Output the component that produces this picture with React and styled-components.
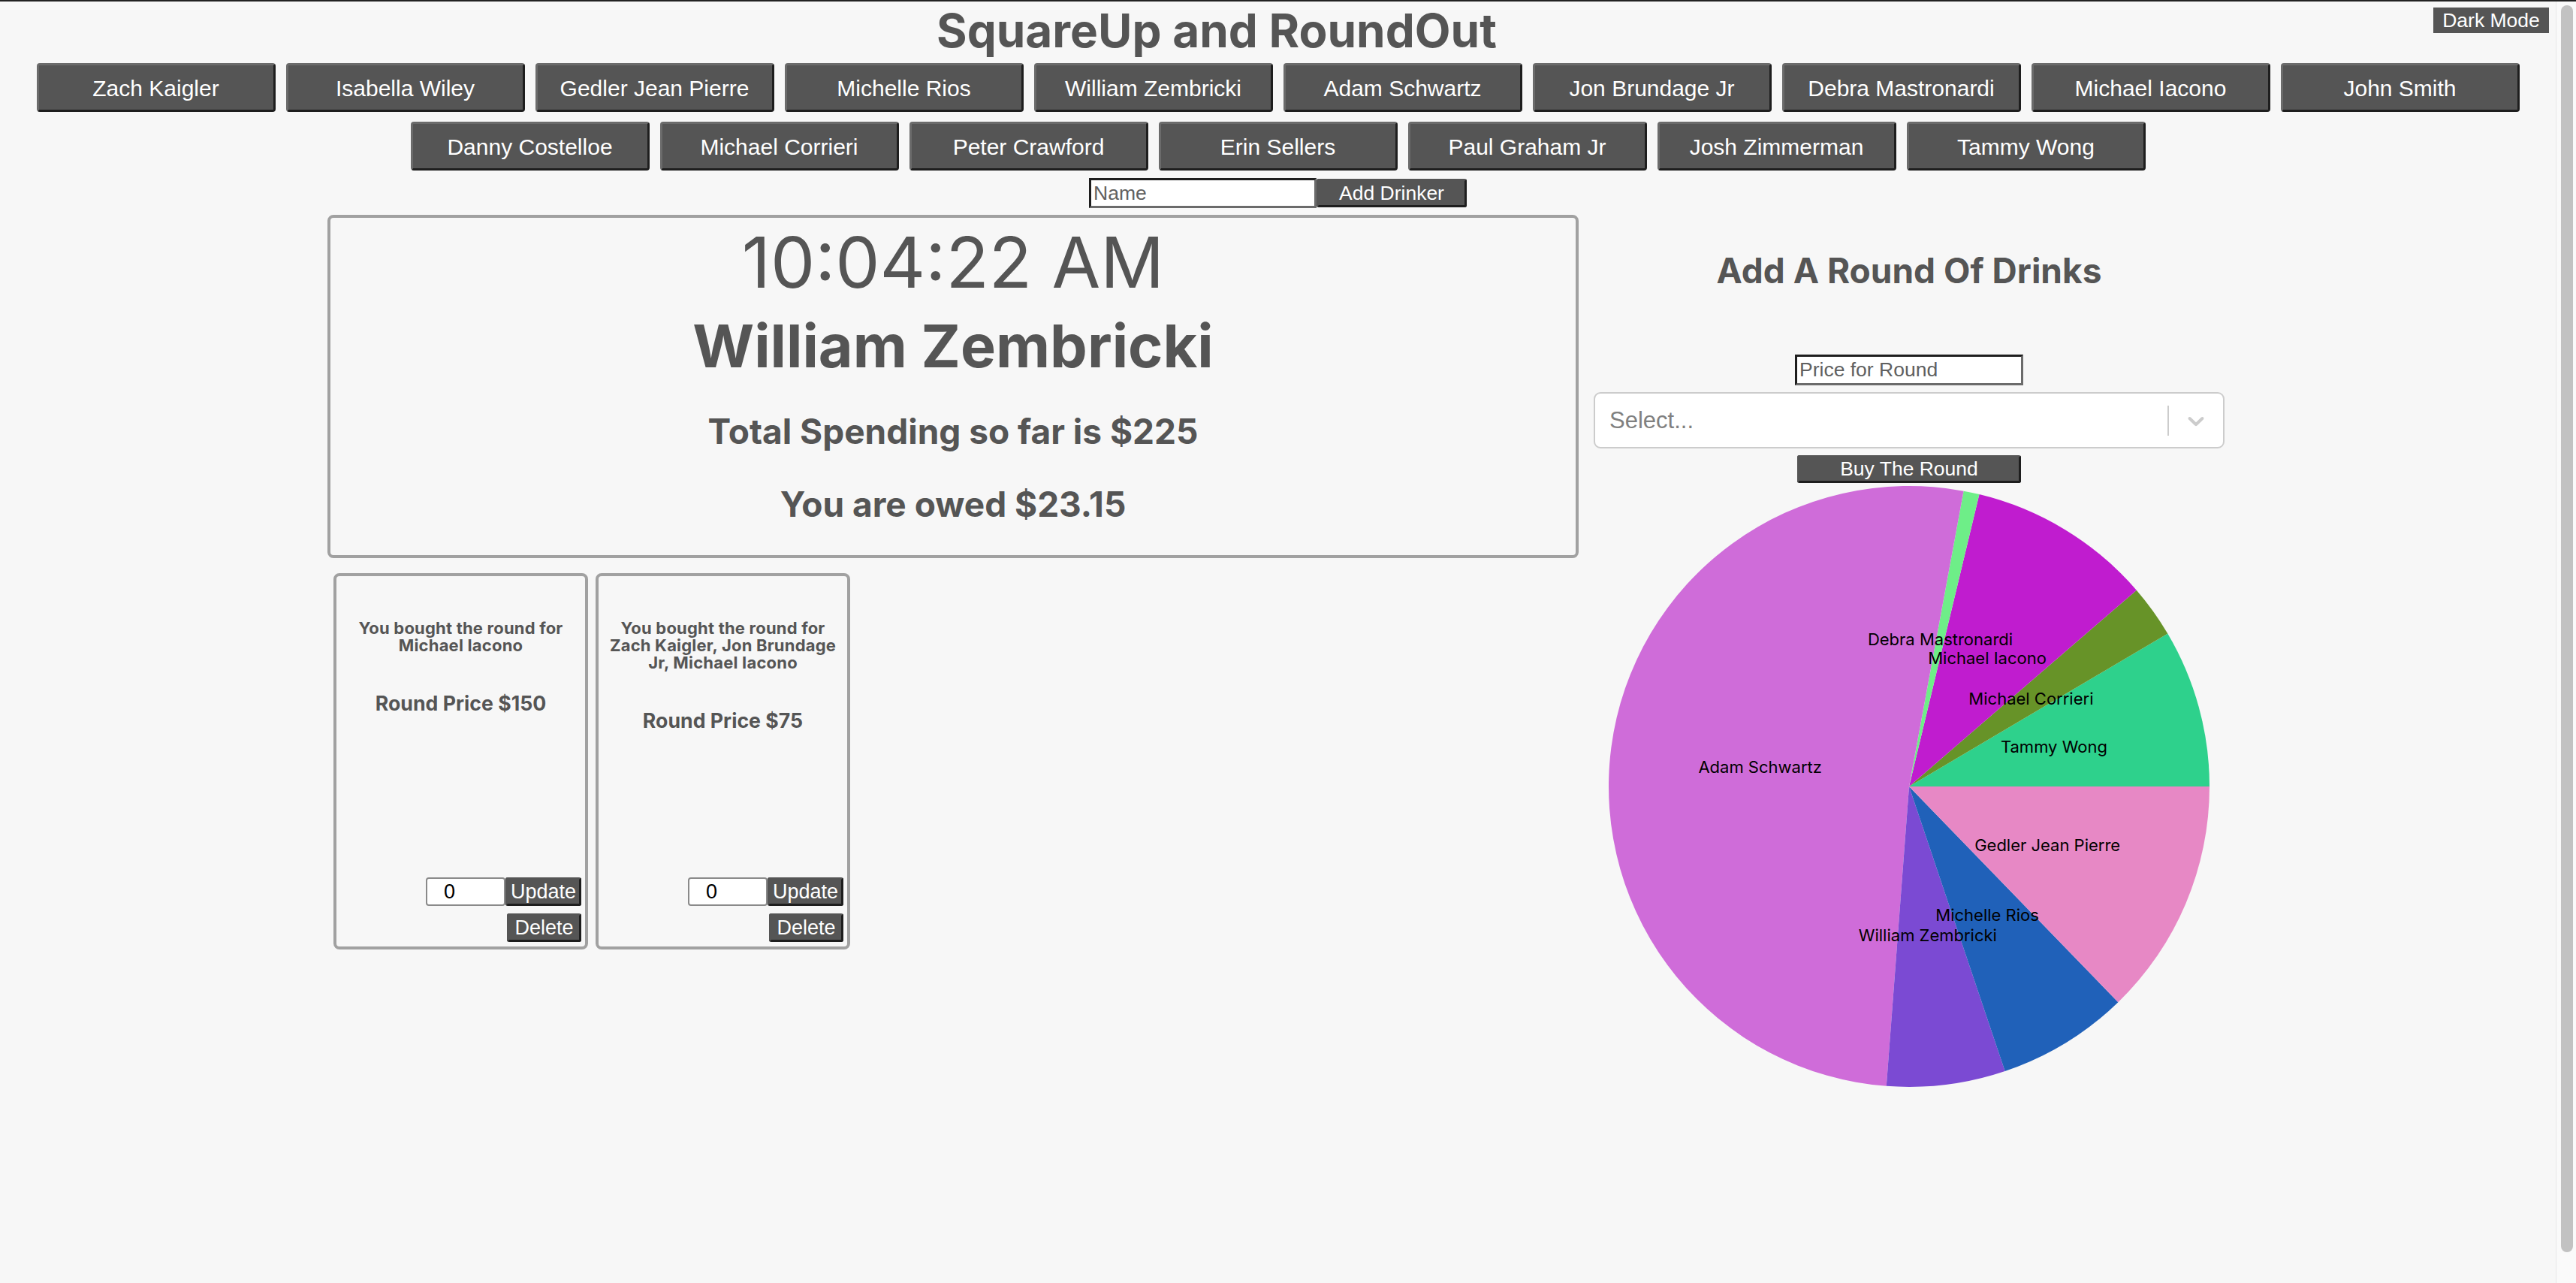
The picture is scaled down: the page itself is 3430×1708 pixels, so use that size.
import React from 'react'
import styled, { createGlobalStyle } from 'styled-components'

const GlobalStyle = createGlobalStyle`
  * { box-sizing: border-box; }
  html, body { margin: 0; padding: 0; background: #f7f7f7; }
  body { font-family: Inter, 'Noto Sans', sans-serif; color: #555; overflow: hidden; }
`

const Frame = styled.div`
  display: flex;
  min-height: 100vh;
  border-top: 2px solid #222;
`

const Page = styled.div`
  flex: 1;
  min-width: 0;
`

const ScrollTrack = styled.aside`
  flex: none;
  width: 27px;
  padding: 5px 4px 0 6px;
  border-left: 1px solid #e6e6e6;
  background: #fafafa;
`

const ScrollThumb = styled.div`
  height: 1660px;
  border-radius: 8px;
  background: #c2c2c2;
`

const Header = styled.header`
  display: flex;
  align-items: flex-start;
`

const Title = styled.h1`
  flex: 1;
  margin: 8px 0 0;
  text-align: center;
  font-size: 62px;
  line-height: 62px;
  font-weight: 700;
  color: #555;
`

const ModeButton = styled.button`
  width: 154px;
  height: 34px;
  margin: 8px 9px 0 0;
  padding: 0;
  border: none;
  background: #555;
  color: #fff;
  font: 26.5px 'Liberation Sans', Arial, sans-serif;
`

const NameGrid = styled.div`
  display: flex;
  flex-wrap: wrap;
  justify-content: center;
  gap: 13px 14px;
  margin-top: 12px;
`

const NameButton = styled.button`
  width: 318px;
  height: 65px;
  padding: 2px 0 0;
  border: 3px solid;
  border-color: #6b6b6b #1e1e1e #1e1e1e #6b6b6b;
  border-radius: 4px;
  background: #555;
  color: #fff;
  font: 30px 'Liberation Sans', Arial, sans-serif;
`

const AddRow = styled.form`
  display: flex;
  justify-content: center;
  align-items: center;
  margin-top: 10px;
`

const InsetInput = styled.input`
  width: ${({ $w }) => $w}px;
  height: ${({ $h }) => $h}px;
  padding: 0 3px;
  border: 3px solid;
  border-color: #1e1e1e #6b6b6b #6b6b6b #1e1e1e;
  background: #fff;
  font: 26.5px 'Liberation Sans', Arial, sans-serif;
  color: #000;
  &::placeholder { color: #606060; }
`

const PriceInput = styled(InsetInput)`
  margin-top: 89px;
`

const FlatButton = styled.button`
  width: ${({ $w }) => $w}px;
  height: ${({ $h }) => $h}px;
  padding: 0;
  border: 3px solid;
  border-color: #555 #1e1e1e #1e1e1e #555;
  border-radius: 3px;
  background: #555;
  color: #fff;
  font: ${({ $fs }) => $fs || 26.5}px 'Liberation Sans', Arial, sans-serif;
`

const BuyButton = styled(FlatButton)`
  margin-top: 9px;
`

const Main = styled.main`
  display: flex;
  justify-content: center;
  align-items: flex-start;
  gap: 20px;
  margin-top: 9px;
  padding-right: 5px;
`

const LeftColumn = styled.section`
  width: 1666px;
`

const RightColumn = styled.section`
  width: 840px;
  display: flex;
  flex-direction: column;
  align-items: center;
`

const SummaryCard = styled.div`
  height: 457px;
  border: 4px solid #a1a1a1;
  border-radius: 8px;
  display: flex;
  flex-direction: column;
  align-items: center;
`

const Clock = styled.div`
  margin-top: 12px;
  font-size: 94px;
  line-height: 1;
  font-weight: 400;
`

const Drinker = styled.h1`
  margin: 25px 0 0;
  font-size: 79px;
  line-height: 1;
  font-weight: 700;
`

const Stat = styled.h3`
  margin: 51px 0 0;
  font-size: 46px;
  line-height: 1;
  font-weight: 700;
`

const RoundsRow = styled.div`
  display: flex;
  gap: 10px;
  margin: 20px 0 0 8px;
`

const RoundCard = styled.div`
  width: 339px;
  height: 501px;
  border: 4px solid #a1a1a1;
  border-radius: 8px;
  padding: 0 5px 6px;
  display: flex;
  flex-direction: column;
  text-align: center;
`

const RoundText = styled.h6`
  margin: 58px 2px 0;
  font-size: 22px;
  line-height: 23px;
  letter-spacing: 0.2px;
  font-weight: 700;
`

const RoundPrice = styled.h5`
  margin: 52px 0 0;
  font-size: 26.7px;
  line-height: 1;
  font-weight: 700;
`

const Spacer = styled.div`
  flex: 1;
`

const Controls = styled.div`
  display: flex;
  justify-content: flex-end;
`

const CountInput = styled.input`
  width: 106px;
  height: 38px;
  padding: 0 0 0 22px;
  border: 2px solid #8a8a8a;
  border-radius: 4px;
  background: #fff;
  font: 27px 'Liberation Sans', Arial, sans-serif;
  color: #000;
`

const DeleteRow = styled(Controls)`
  margin-top: 10px;
`

const SectionTitle = styled.h2`
  margin: 51px 0 0;
  font-size: 46px;
  line-height: 1;
  font-weight: 700;
`

const SelectBox = styled.div`
  width: 840px;
  height: 75px;
  margin-top: 9px;
  border: 2px solid #cccccc;
  border-radius: 9px;
  background: #fff;
  display: flex;
  align-items: center;
`

const Placeholder = styled.span`
  flex: 1;
  padding-left: 19px;
  color: #808080;
  font: 31px 'Liberation Sans', Arial, sans-serif;
`

const Separator = styled.span`
  width: 2px;
  height: 40px;
  background: #cccccc;
`

const Indicator = styled.span`
  width: 72px;
  display: flex;
  justify-content: center;
  color: #cccccc;
`

const PieSvg = styled.svg`
  display: block;
`

const drinkers = [
  'Zach Kaigler', 'Isabella Wiley', 'Gedler Jean Pierre', 'Michelle Rios', 'William Zembricki',
  'Adam Schwartz', 'Jon Brundage Jr', 'Debra Mastronardi', 'Michael Iacono', 'John Smith',
  'Danny Costelloe', 'Michael Corrieri', 'Peter Crawford', 'Erin Sellers', 'Paul Graham Jr',
  'Josh Zimmerman', 'Tammy Wong',
]

const rounds = [
  { id: 1, forWho: 'Michael Iacono', price: 150 },
  { id: 2, forWho: 'Zach Kaigler, Jon Brundage Jr, Michael Iacono', price: 75 },
]

const spending = [
  { name: 'Tammy Wong', value: 300, color: '#2ed18c' },
  { name: 'Michael Corrieri', value: 100, color: '#679328' },
  { name: 'Michael Iacono', value: 350, color: '#c01ccf' },
  { name: 'Debra Mastronardi', value: 30, color: '#6eee88' },
  { name: 'Adam Schwartz', value: 1825, color: '#cf6cd9' },
  { name: 'William Zembricki', value: 225, color: '#7b4ad3' },
  { name: 'Michelle Rios', value: 250, color: '#2061b9' },
  { name: 'Gedler Jean Pierre', value: 450, color: '#e788c5' },
]

function SpendingPie() {
  const cx = 420
  const cy = 404
  const r = 400
  const total = spending.reduce((s, d) => s + d.value, 0)
  const pt = (deg, rad) => {
    const a = (deg * Math.PI) / 180
    return [cx + rad * Math.cos(a), cy - rad * Math.sin(a)]
  }
  let start = 0
  const parts = spending.map((d) => {
    const span = (d.value / total) * 360
    const end = start + span
    const [x1, y1] = pt(start, r)
    const [x2, y2] = pt(end, r)
    const [lx, ly] = pt(start + span / 2, r / 2)
    const path = `M${cx},${cy} L${x1},${y1} A${r},${r} 0 ${span > 180 ? 1 : 0} 0 ${x2},${y2} Z`
    start = end
    return { ...d, path, lx, ly }
  })
  return (
    <PieSvg width="840" height="810" viewBox="0 0 840 810">
      {parts.map((p) => <path key={p.name} d={p.path} fill={p.color} />)}
      {parts.map((p) => (
        <text key={p.name} x={p.lx} y={p.ly} textAnchor="middle" dominantBaseline="central"
          fill="#000" fontSize="22" fontFamily="Inter, sans-serif">{p.name}</text>
      ))}
    </PieSvg>
  )
}

function RoundItem({ round }) {
  return (
    <RoundCard>
      <RoundText>You bought the round for {round.forWho}</RoundText>
      <RoundPrice>Round Price ${round.price}</RoundPrice>
      <Spacer />
      <Controls>
        <CountInput type="text" defaultValue="0" />
        <FlatButton $w={101} $h={38} $fs={27}>Update</FlatButton>
      </Controls>
      <DeleteRow>
        <FlatButton $w={99} $h={38} $fs={27}>Delete</FlatButton>
      </DeleteRow>
    </RoundCard>
  )
}

export default function App() {
  return (
    <>
      <GlobalStyle />
      <Frame>
        <Page>
          <Header>
            <Title>SquareUp and RoundOut</Title>
            <ModeButton>Dark Mode</ModeButton>
          </Header>
          <NameGrid>
            {drinkers.map((name) => <NameButton key={name}>{name}</NameButton>)}
          </NameGrid>
          <AddRow onSubmit={(e) => e.preventDefault()}>
            <InsetInput $w={303} $h={40} placeholder="Name" />
            <FlatButton $w={200} $h={38}>Add Drinker</FlatButton>
          </AddRow>
          <Main>
            <LeftColumn>
              <SummaryCard>
                <Clock>10:04:22 AM</Clock>
                <Drinker>William Zembricki</Drinker>
                <Stat>Total Spending so far is $225</Stat>
                <Stat>You are owed $23.15</Stat>
              </SummaryCard>
              <RoundsRow>
                {rounds.map((r) => <RoundItem key={r.id} round={r} />)}
              </RoundsRow>
            </LeftColumn>
            <RightColumn>
              <SectionTitle>Add A Round Of Drinks</SectionTitle>
              <PriceInput $w={304} $h={41} placeholder="Price for Round" />
              <SelectBox>
                <Placeholder>Select...</Placeholder>
                <Separator />
                <Indicator>
                  <svg width="36" height="36" viewBox="0 0 20 20" fill="currentColor">
                    <path d="M4.516 7.548c0.436-0.446 1.043-0.481 1.576 0l3.908 3.747 3.908-3.747c0.533-0.481 1.141-0.446 1.574 0 0.436 0.445 0.408 1.197 0 1.615-0.406 0.418-4.695 4.502-4.695 4.502-0.217 0.223-0.502 0.335-0.787 0.335s-0.57-0.112-0.789-0.335c0 0-4.287-4.084-4.695-4.502s-0.436-1.17 0-1.615z" />
                  </svg>
                </Indicator>
              </SelectBox>
              <BuyButton $w={298} $h={37}>Buy The Round</BuyButton>
              <SpendingPie />
            </RightColumn>
          </Main>
        </Page>
        <ScrollTrack>
          <ScrollThumb />
        </ScrollTrack>
      </Frame>
    </>
  )
}
